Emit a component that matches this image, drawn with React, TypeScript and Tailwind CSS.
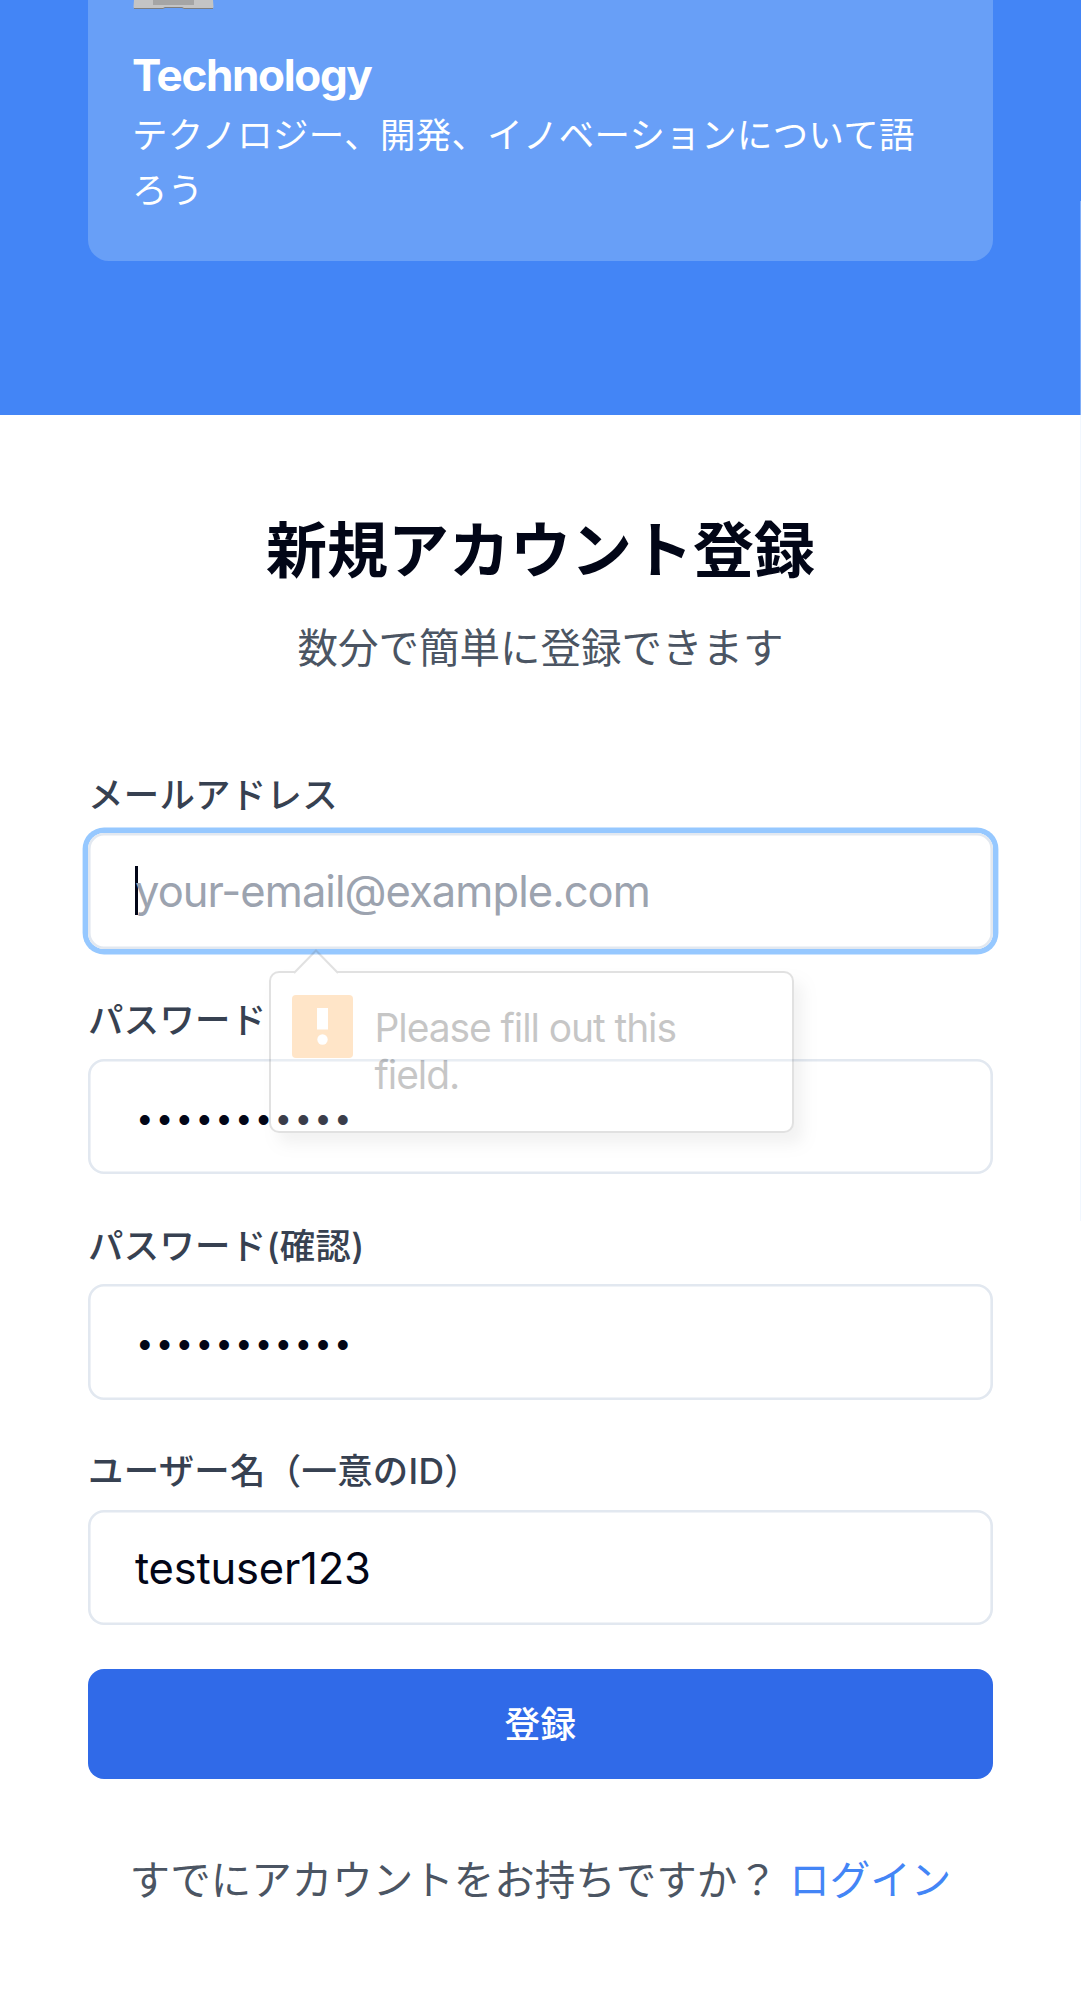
import type { ReactNode } from "react";

const inputBox =
  "flex h-[115.6px] w-full items-center rounded-[16px] bg-white pt-[3px] pl-[47px] text-[43.5px] tracking-[-0.2px] text-[#020617] shadow-[inset_0_0_0_2.6px_#e2e8f0]";

function Field({ label, children }: { label: string; children: ReactNode }) {
  return (
    <div className="flex h-[225.5px] flex-col">
      <div className="h-[66px] pt-[1.5px] text-[35.4px] leading-[54px] font-medium tracking-[0.3px] text-[#374151]">
        {label}
      </div>
      {children}
    </div>
  );
}

function Dots() {
  return (
    <span className="pt-[4px] pl-[3.5px] font-['Liberation_Sans'] text-[36px] leading-[46px] tracking-[7.2px]">
      •••••••••••
    </span>
  );
}

function ValidationBubble() {
  return (
    <div className="absolute top-[138px] left-[180.5px] h-[162px] w-[525.5px] opacity-[0.22]">
      <div className="flex h-full gap-[22px] rounded-[10px] border-[2.5px] border-[#7b7b7b] bg-white pt-[22px] pl-[21px] shadow-[9px_11px_14px_rgba(0,0,0,0.22)]">
        <svg className="h-[63px] w-[61px] shrink-0" viewBox="0 0 61 63">
          <rect width="61" height="63" rx="4" fill="#ff8c0a" />
          <rect x="25" y="13" width="11" height="21.5" fill="#fff" />
          <circle cx="30.5" cy="44.500" r="5.2" fill="#fff" />
        </svg>
        <p className="w-[330px] pt-[10px] text-[39px] leading-[46.500px] tracking-[-1.1px] text-black">
          Please fill out this field.
        </p>
      </div>
      <svg className="absolute -top-[22px] left-[24px] h-[26px] w-[46px]" viewBox="0 0 46 26">
        <path d="M1.500 24 L23 1.500 L44.500 24 V26 H1.500Z" fill="#fff" />
        <path d="M1 24 L23 1.500 L45 24" fill="none" stroke="#7b7b7b" strokeWidth="2" />
      </svg>
    </div>
  );
}

export default function App() {
  return (
    <div className="relative h-[1999px] w-[1081px] overflow-hidden bg-white font-['Inter','Noto_Sans_CJK_JP',sans-serif]">
      <section className="h-[415px] bg-[#4385f6] px-[88px]">
        <div className="h-[260.7px] w-[904.7px] rounded-b-[21px] bg-[#689ff7] px-[45px] text-white">
          <svg className="h-[10px] w-[81px]" viewBox="0 0 81 10">
            <path d="M1 0H80L80.500 7Q80.500 9 78 9H51L49 7.500H32L30 9H3Q.5 9 .5 7Z" fill="#c4c4c4" />
            <path d="M20 0H61V5H20Z" fill="#a5a5a5" />
            <path d="M1 8.500H30L32 7.500H49L51 8.500H80" fill="none" stroke="#7e7e7e" />
          </svg>
          <h3 className="-ml-px pt-[37px] text-[44px] leading-[56px] font-bold tracking-[-1.35px]">Technology</h3>
          <p className="mt-[6px] -ml-px w-[815px] text-[35.4px] leading-[54.500px] tracking-[0.38px]">
            テクノロジー、開発、イノベーションについて語ろう
          </p>
        </div>
      </section>

      <main className="px-[88px]">
        <header className="flex flex-col items-center pt-[96px]">
          <h1 className="text-[61px] leading-[80px] font-bold text-[#020617]">新規アカウント登録</h1>
          <p className="mt-[28px] text-[40.5px] leading-[60px] text-[#4b5563]">数分で簡単に登録できます</p>
        </header>

        <form className="relative mt-[88px] w-[904.7px]">
          <Field label="メールアドレス">
            <div className="relative flex h-[115.6px] w-full items-center rounded-[16px] bg-white pl-[46.5px] shadow-[inset_0_0_0_2.6px_#e2e8f0,0_0_0_5.4px_#96c8ff]">
              <span className="h-[49px] w-[3px] bg-[#020617]" />
              <span className="-ml-[2.5px] pt-[1px] text-[43.5px] tracking-[-0.95px] text-[#9ca3af]">
                your-email@example.com
              </span>
            </div>
          </Field>
          <Field label="パスワード">
            <div className={inputBox}>
              <Dots />
            </div>
          </Field>
          <Field label="パスワード(確認)">
            <div className={inputBox}>
              <Dots />
            </div>
          </Field>
          <Field label="ユーザー名（一意のID）">
            <div className={inputBox}>testuser123</div>
          </Field>
          <button
            type="button"
            className="block h-[110px] w-full rounded-[16px] bg-[#306ae8] pt-[4px] text-center text-[35.8px] font-medium text-white"
          >
            登録
          </button>
          <div className="absolute top-[66px] left-0">
            <ValidationBubble />
          </div>
        </form>

        <p className="mt-[72px] w-[904.7px] text-center text-[40.5px] leading-[60px] whitespace-nowrap text-[#4b5563]">
          すでにアカウントをお持ちですか？ <a className="text-[#4385f6]">ログイン</a>
        </p>
      </main>
      <div className="absolute top-[201px] right-0 h-[1020px] w-px bg-[#dbeafe]/40" />
    </div>
  );
}
